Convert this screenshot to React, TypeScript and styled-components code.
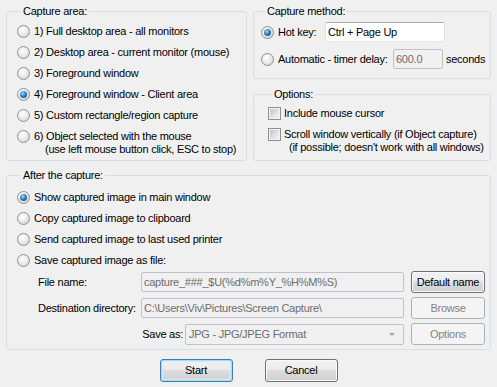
import React from 'react';
import styled, { createGlobalStyle, css } from 'styled-components';

const GlobalStyle = createGlobalStyle`
  html, body {
    margin: 0;
    padding: 0;
    background: #f0f0f0;
  }
  body {
    font-family: "Liberation Sans", Arial, sans-serif;
    font-size: 11px;
    letter-spacing: -0.25px;
    color: #000;
  }
  * {
    box-sizing: border-box;
  }
`;

const Dialog = styled.div`
  width: 497px;
  height: 387px;
  padding: 5px 6px 0;
  background: #f0f0f0;
  line-height: 13px;
  white-space: nowrap;
`;

const TopGrid = styled.div`
  display: grid;
  grid-template-columns: 241px 1fr;
  column-gap: 6px;
`;

const RightColumn = styled.div`
  display: flex;
  flex-direction: column;
  gap: 9px;
`;

const Group = styled.fieldset<{ $pad: string; $grow?: boolean; $top?: number }>`
  margin: ${({ $top }) => $top || 0}px 0 0;
  min-width: 0;
  padding: ${({ $pad }) => $pad};
  border: 1px solid #d5dfe5;
  border-radius: 3px;
  ${({ $grow }) => $grow && 'flex: 1;'}
`;

const Legend = styled.legend`
  margin-left: 4px;
  padding: 0 2px;
  line-height: 13px;
`;

const OptionRow = styled.div`
  display: flex;
  align-items: flex-start;
  min-height: 21px;
  padding-top: 4px;
`;

const RadioMark = styled.span<{ $on?: boolean }>`
  position: relative;
  flex: none;
  width: 13px;
  height: 13px;
  margin-right: 4px;
  border-radius: 50%;
  border: 1px solid #8f9192;
  background: radial-gradient(circle at 40% 35%, #ffffff 0%, #ececec 45%, #c8cacc 100%);
  ${({ $on }) =>
    $on &&
    css`
      &::after {
        content: '';
        position: absolute;
        left: 2px;
        top: 2px;
        width: 7px;
        height: 7px;
        border-radius: 50%;
        background: radial-gradient(circle at 40% 35%, #a8dcfa 0%, #2c80c4 45%, #0e3d6b 100%);
      }
    `}
`;

const CheckMark = styled.span`
  flex: none;
  width: 13px;
  height: 13px;
  margin-right: 3px;
  border: 1px solid #8f8f8f;
  box-shadow: inset 0 0 0 1px #f4f4f4;
  background: linear-gradient(135deg, #b9bec4 0%, #e4e5e7 60%, #f6f6f6 100%);
`;

const OptionText = styled.span``;

const SubLine = styled.span<{ $indent: number }>`
  display: block;
  padding-left: ${({ $indent }) => $indent}px;
`;

const MethodRow = styled.div`
  display: flex;
  align-items: center;
  height: 22px;

  & + & {
    margin-top: 5px;
  }
`;

const FieldLabel = styled.span<{ $w?: number }>`
  flex: none;
  ${({ $w }) => $w && `width: ${$w}px;`}
`;

const TextInput = styled.input<{ $w?: number }>`
  width: ${({ $w }) => ($w ? `${$w}px` : '100%')};
  height: 20px;
  margin: 0;
  padding: 0 2px;
  font: inherit;
  letter-spacing: inherit;
  color: #000;
  background: #fff;
  border: 1px solid;
  border-color: #abadb3 #dbdfe6 #e3e9ef #e2e3ea;
  border-radius: 2px;
  outline: none;

  &:disabled {
    color: #6d6d6d;
    -webkit-text-fill-color: #6d6d6d;
    background: #f0f0f0;
    border-color: #bfc3c8;
  }
`;

const Suffix = styled.span`
  margin-left: 3px;
`;

const FileGrid = styled.div`
  display: grid;
  grid-template-columns: 96px 1fr 74px;
  grid-auto-rows: 22px;
  column-gap: 7px;
  row-gap: 4px;
  align-items: center;
  margin-left: 21px;
`;

const SaveAsCell = styled.div`
  display: flex;
  align-items: center;
  justify-content: flex-end;
`;

const Combo = styled.div`
  display: flex;
  align-items: center;
  width: 219px;
  height: 21px;
  margin-left: 2px;
  padding: 0 2px 0 3px;
  color: #6d6d6d;
  background: #f0f0f0;
  border: 1px solid #bfc3c8;
  border-radius: 2px;
`;

const ComboText = styled.span`
  flex: 1;
`;

const ComboArrow = styled.span`
  width: 0;
  height: 0;
  margin-right: 6px;
  border-left: 3px solid transparent;
  border-right: 3px solid transparent;
  border-top: 3px solid #a3a3a3;
`;

const Button = styled.button<{ $primary?: boolean; $w?: number; $h?: number }>`
  width: ${({ $w }) => $w || 74}px;
  height: ${({ $h }) => $h || 22}px;
  margin: 0;
  padding: 0;
  font: inherit;
  letter-spacing: inherit;
  color: #000;
  border: 1px solid #707070;
  border-radius: 3px;
  background: linear-gradient(#f2f2f2 0%, #ebebeb 45%, #dddddd 50%, #cfcfcf 100%);
  box-shadow: inset 0 0 0 1px #fbfbfb;

  ${({ $primary }) =>
    $primary &&
    css`
      border-color: #3c7fb1;
      box-shadow: inset 0 0 0 1px #a6dcf4, inset 0 0 2px 2px #d4eefa;
    `}

  &:disabled {
    color: #838383;
    border-color: #adb2b5;
    background: #f4f4f4;
    box-shadow: none;
  }
`;

const ButtonBar = styled.div`
  display: flex;
  justify-content: center;
  gap: 32px;
  margin-top: 9px;
`;

const areaOptions = [
  '1) Full desktop area - all monitors',
  '2) Desktop area - current monitor (mouse)',
  '3) Foreground window',
  '4) Foreground window - Client area',
  '5) Custom rectangle/region capture',
];

const afterOptions = [
  'Show captured image in main window',
  'Copy captured image to clipboard',
  'Send captured image to last used printer',
  'Save captured image as file:',
];

export default function App() {
  return (
    <>
      <GlobalStyle />
      <Dialog>
        <TopGrid>
          <Group $pad="3px 4px 4px 10px">
            <Legend>Capture area:</Legend>
            {areaOptions.map((label, i) => (
              <OptionRow key={label}>
                <RadioMark $on={i === 3} />
                <OptionText>{label}</OptionText>
              </OptionRow>
            ))}
            <OptionRow>
              <RadioMark />
              <OptionText>
                6) Object selected with the mouse
                <SubLine $indent={11}>(use left mouse button click, ESC to stop)</SubLine>
              </OptionText>
            </OptionRow>
          </Group>

          <RightColumn>
            <Group $pad="3px 4px 8px 7px">
              <Legend>Capture method:</Legend>
              <MethodRow>
                <RadioMark $on />
                <FieldLabel $w={47}>Hot key:</FieldLabel>
                <TextInput $w={120} readOnly value="Ctrl + Page Up" />
              </MethodRow>
              <MethodRow>
                <RadioMark />
                <FieldLabel $w={115}>Automatic - timer delay:</FieldLabel>
                <TextInput $w={50} disabled value="600.0" />
                <Suffix>seconds</Suffix>
              </MethodRow>
            </Group>

            <Group $pad="2px 4px 4px 14px" $grow>
              <Legend>Options:</Legend>
              <OptionRow>
                <CheckMark />
                <OptionText>Include mouse cursor</OptionText>
              </OptionRow>
              <OptionRow>
                <CheckMark />
                <OptionText>
                  Scroll window vertically (if Object capture)
                  <SubLine $indent={5}>(if possible; doesn't work with all windows)</SubLine>
                </OptionText>
              </OptionRow>
            </Group>
          </RightColumn>
        </TopGrid>

        <Group $pad="5px 5px 4px 10px" $top={8}>
          <Legend>After the capture:</Legend>
          {afterOptions.map((label, i) => (
            <OptionRow key={label}>
              <RadioMark $on={i === 0} />
              <OptionText>{label}</OptionText>
            </OptionRow>
          ))}
          <FileGrid>
            <FieldLabel>File name:</FieldLabel>
            <TextInput disabled value="capture_###_$U(%d%m%Y_%H%M%S)" />
            <Button>Default name</Button>

            <FieldLabel>Destination directory:</FieldLabel>
            <TextInput disabled value="C:\Users\Viv\Pictures\Screen Capture\" />
            <Button disabled>Browse</Button>

            <span />
            <SaveAsCell>
              <FieldLabel>Save as:</FieldLabel>
              <Combo>
                <ComboText>JPG - JPG/JPEG Format</ComboText>
                <ComboArrow />
              </Combo>
            </SaveAsCell>
            <Button disabled>Options</Button>
          </FileGrid>
        </Group>

        <ButtonBar>
          <Button $primary $w={73} $h={23}>
            Start
          </Button>
          <Button $w={73} $h={23}>
            Cancel
          </Button>
        </ButtonBar>
      </Dialog>
    </>
  );
}
